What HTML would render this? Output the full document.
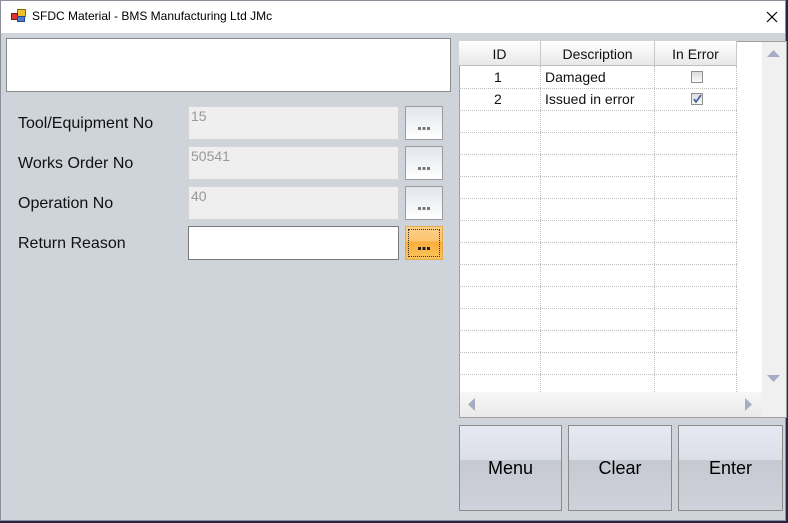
<!DOCTYPE html>
<html><head><meta charset="utf-8"><style>
*{box-sizing:border-box;margin:0;padding:0}
body{width:788px;height:523px;overflow:hidden;background:#2a2440;font-family:"Liberation Sans",Arial,sans-serif;position:relative}
.win{position:absolute;left:0;top:0;width:786px;height:521px;background:#cfd3da;outline:1px solid #8a8f99;outline-offset:-1px}
.title{position:absolute;left:1px;top:1px;width:784px;height:32px;background:#fff}
.title .t{position:absolute;left:31px;top:8px;font-size:12px;color:#000}
.abs{position:absolute}
.lbl{position:absolute;left:18px;font-size:16px;color:#111}
.tb{position:absolute;left:188px;width:211px;height:34px;background:#efefef;border:1px solid #d4d4d4;color:#9a9a9a;font-size:14px;padding:1px 2px}
.btn{position:absolute;left:405px;width:38px;height:34px;border:1px solid #9b9b9b;background:linear-gradient(#e2e5ec,#fff)}
.dots{position:absolute;left:12px;top:20px;width:12px;height:3px;background:linear-gradient(90deg,#777 0 3px,transparent 3px 4.5px,#777 4.5px 7.5px,transparent 7.5px 9px,#777 9px 12px)}
.grid{position:absolute;left:459px;top:41px;width:328px;height:377px;background:#fff;outline:1px solid #a0a0a0;outline-offset:-1px}
.hd{position:absolute;top:0;height:25px;background:linear-gradient(#fff,#e8e8e8);border-right:1px solid #c8c8c8;border-bottom:1px solid #c0c0c0;text-align:center;font-size:14px;padding-top:5px;color:#111}
.vl{position:absolute;top:25px;height:326px;border-left:1px dotted #bdbdbd}
.hl{position:absolute;left:0;width:278px;border-top:1px dotted #bdbdbd}
.cell{position:absolute;font-size:14px;color:#111}
.cb{position:absolute;left:232px;width:12px;height:12px;border:1px solid #8e8f8f;background:linear-gradient(#ddd,#fafafa)}
.bb{position:absolute;top:425px;height:86px;border:1px solid #8a8a8a;background:linear-gradient(#e6e9f3 0,#dcdfe8 40%,#c6c9d1 41%,#cfd2da 100%);font-size:18px;text-align:center;padding-top:32px;color:#000}
</style></head><body>
<div class="win">
 <div class="title">
  <svg class="abs" style="left:10px;top:8px" width="16" height="14"><rect x="6.5" y="0.5" width="8" height="7" fill="#f2c12e" stroke="#8a6a10"/><rect x="0.5" y="4.5" width="6" height="6" fill="#d33" stroke="#7a1a1a"/><rect x="6.5" y="7.5" width="7" height="5" fill="#4a7fd0" stroke="#244a8a"/></svg>
  <div class="t">SFDC Material - BMS Manufacturing Ltd JMc</div>
  <svg class="abs" style="left:765px;top:10px" width="12" height="12"><path d="M1 1 L11 11 M11 1 L1 11" stroke="#000" stroke-width="1.2"/></svg>
 </div>
 <div class="abs" style="left:6px;top:38px;width:445px;height:54px;background:#fff;border:1px solid #8a8a8a"></div>

 <div class="lbl" style="top:115px">Tool/Equipment No</div>
 <div class="lbl" style="top:155px">Works Order No</div>
 <div class="lbl" style="top:195px">Operation No</div>
 <div class="lbl" style="top:235px">Return Reason</div>

 <div class="tb" style="top:106px">15</div>
 <div class="tb" style="top:146px">50541</div>
 <div class="tb" style="top:186px">40</div>
 <div class="tb" style="top:226px;background:#fff;border-color:#7a7a7a"></div>

 <div class="btn" style="top:106px"><div class="dots"></div></div>
 <div class="btn" style="top:146px"><div class="dots"></div></div>
 <div class="btn" style="top:186px"><div class="dots"></div></div>
 <div class="btn" style="top:226px;background:linear-gradient(#fdd08a 0,#fcc46e 45%,#f9ad3a 46%,#fbc55e 100%);border-color:#e8a94a;outline:1px dotted #333;outline-offset:-4px"><div class="dots" style="background:linear-gradient(90deg,#222 0 3px,transparent 3px 4.5px,#222 4.5px 7.5px,transparent 7.5px 9px,#222 9px 12px)"></div></div>

 <div class="grid">
  <div class="hd" style="left:0;width:82px">ID</div>
  <div class="hd" style="left:82px;width:114px">Description</div>
  <div class="hd" style="left:196px;width:82px">In Error</div>
  <div class="vl" style="left:81px"></div>
  <div class="vl" style="left:195px"></div>
  <div class="vl" style="left:277px"></div>
  <div class="hl" style="top:47px"></div><div class="hl" style="top:69px"></div><div class="hl" style="top:91px"></div><div class="hl" style="top:113px"></div><div class="hl" style="top:135px"></div><div class="hl" style="top:157px"></div><div class="hl" style="top:179px"></div><div class="hl" style="top:201px"></div><div class="hl" style="top:223px"></div><div class="hl" style="top:245px"></div><div class="hl" style="top:267px"></div><div class="hl" style="top:289px"></div><div class="hl" style="top:311px"></div><div class="hl" style="top:333px"></div>
  <div class="cell" style="left:35px;top:28px">1</div>
  <div class="cell" style="left:86px;top:28px">Damaged</div>
  <div class="cb" style="top:30px"></div>
  <div class="cell" style="left:35px;top:50px">2</div>
  <div class="cell" style="left:86px;top:50px">Issued in error</div>
  <div class="cb" style="top:52px"><svg width="10" height="10" style="position:absolute;left:0;top:0"><path d="M2 5 L4 8 L9 1" stroke="#3a5a9a" stroke-width="1.6" fill="none"/></svg></div>
  <div class="abs" style="left:303px;top:1px;width:24px;height:350px;background:#f0f0f0"></div>
  <svg class="abs" style="left:308px;top:9px" width="13" height="8"><path d="M0 7 L6.5 0 L13 7Z" fill="#a6adc2"/></svg>
  <svg class="abs" style="left:308px;top:334px" width="13" height="8"><path d="M0 0 L6.5 7 L13 0Z" fill="#a6adc2"/></svg>
  <div class="abs" style="left:1px;top:351px;width:302px;height:25px;background:linear-gradient(#f7f7f7,#eaeaea)"></div>
  <div class="abs" style="left:303px;top:351px;width:24px;height:25px;background:#f0f0f0"></div>
  <svg class="abs" style="left:9px;top:357px" width="8" height="13"><path d="M7 0 L0 6.5 L7 13Z" fill="#a6adc2"/></svg>
  <svg class="abs" style="left:286px;top:357px" width="8" height="13"><path d="M0 0 L7 6.5 L0 13Z" fill="#a6adc2"/></svg>
 </div>

 <div class="bb" style="left:459px;width:103px">Menu</div>
 <div class="bb" style="left:568px;width:104px">Clear</div>
 <div class="bb" style="left:678px;width:105px">Enter</div>
</div>
</body></html>
